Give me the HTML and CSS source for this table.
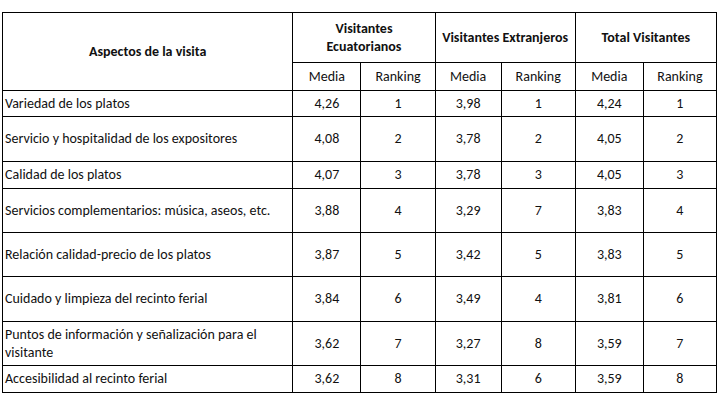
FILE: index.html
```html
<!DOCTYPE html>
<html lang="es">
<head>
<meta charset="utf-8">
<title>Aspectos de la visita</title>
<link rel="stylesheet" href="styles.css">
</head>
<body>
<table class="tabla">
  <colgroup>
    <col class="c-asp">
    <col class="c-m1">
    <col class="c-r1">
    <col class="c-m2">
    <col class="c-r2">
    <col class="c-m3">
    <col class="c-r3">
  </colgroup>
  <thead>
    <tr class="h-grupo">
      <th rowspan="2" class="h-asp">Aspectos de la visita</th>
      <th colspan="2" class="h-g">Visitantes<br>Ecuatorianos</th>
      <th colspan="2" class="h-g">Visitantes Extranjeros</th>
      <th colspan="2" class="h-g">Total Visitantes</th>
    </tr>
    <tr class="h-sub">
      <td>Media</td><td>Ranking</td>
      <td>Media</td><td>Ranking</td>
      <td>Media</td><td>Ranking</td>
    </tr>
  </thead>
  <tbody>
    <tr class="r-s">
      <td class="asp">Variedad de los platos</td>
      <td>4,26</td><td>1</td><td>3,98</td><td>1</td><td>4,24</td><td>1</td>
    </tr>
    <tr class="r-l">
      <td class="asp">Servicio y hospitalidad de los expositores</td>
      <td>4,08</td><td>2</td><td>3,78</td><td>2</td><td>4,05</td><td>2</td>
    </tr>
    <tr class="r-s2">
      <td class="asp">Calidad de los platos</td>
      <td>4,07</td><td>3</td><td>3,78</td><td>3</td><td>4,05</td><td>3</td>
    </tr>
    <tr class="r-l2">
      <td class="asp">Servicios complementarios: música, aseos, etc.</td>
      <td>3,88</td><td>4</td><td>3,29</td><td>7</td><td>3,83</td><td>4</td>
    </tr>
    <tr class="r-l2">
      <td class="asp">Relación calidad-precio de los platos</td>
      <td>3,87</td><td>5</td><td>3,42</td><td>5</td><td>3,83</td><td>5</td>
    </tr>
    <tr class="r-l">
      <td class="asp">Cuidado y limpieza del recinto ferial</td>
      <td>3,84</td><td>6</td><td>3,49</td><td>4</td><td>3,81</td><td>6</td>
    </tr>
    <tr class="r-l2">
      <td class="asp">Puntos de información y señalización para el visitante</td>
      <td>3,62</td><td>7</td><td>3,27</td><td>8</td><td>3,59</td><td>7</td>
    </tr>
    <tr class="r-s2">
      <td class="asp">Accesibilidad al recinto ferial</td>
      <td>3,62</td><td>8</td><td>3,31</td><td>6</td><td>3,59</td><td>8</td>
    </tr>
  </tbody>
</table>
</body>
</html>
```
FILE: styles.css
```css
html, body {
  margin: 0;
  background: #ffffff;
}
body {
  padding: 12px 0 0 2px;
  font-family: Carlito, Calibri, "Open Sans", sans-serif;
  font-size: 14px;
  color: #111111;
}
.tabla {
  border-collapse: collapse;
  table-layout: fixed;
  width: 715px;
}
.c-asp { width: 290px; }
.c-m1 { width: 68px; }
.c-r1 { width: 74px; }
.c-m2 { width: 66px; }
.c-r2 { width: 74px; }
.c-m3 { width: 68px; }
.c-r3 { width: 73px; }
.tabla th,
.tabla td {
  border: 1px solid #000;
  padding: 0 2px;
  text-align: center;
  vertical-align: middle;
  line-height: 18px;
}
.tabla th {
  font-weight: bold;
}
.tabla td.asp {
  text-align: left;
}
.h-grupo { height: 50px; }
.h-sub { height: 28px; }
.r-s { height: 26px; }
.r-s2 { height: 27px; }
.r-l { height: 45px; }
.r-l2 { height: 44px; }
```
